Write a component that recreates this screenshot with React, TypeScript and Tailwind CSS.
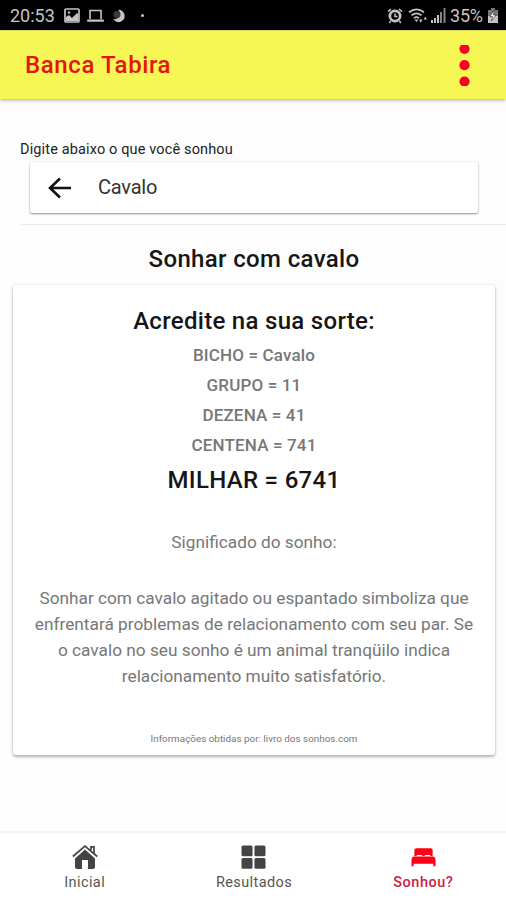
import React from "react";

const font = "font-['Roboto','Liberation_Sans',sans-serif]";

function StatusBar() {
  return (
    <div className="flex h-[30px] shrink-0 items-center bg-black text-[#c4c4c4]">
      <span className="ml-[10px] mt-[2px] w-[46px] whitespace-nowrap text-[18px] leading-[24px]">20:53</span>
      <svg className="ml-[8px] mt-[1px]" width="16" height="15" viewBox="0 0 16 15">
        <rect x="1" y="1" width="14" height="13" rx="1" fill="none" stroke="currentColor" strokeWidth="1.7" />
        <path d="M2 12V9l3-2 3 3 5-5 1 1v7H2Z" fill="currentColor" />
        <circle cx="5" cy="4.5" r="1.2" fill="currentColor" />
      </svg>
      <svg className="ml-[7px] mt-[1px]" width="17" height="14" viewBox="0 0 17 14">
        <path d="M3 10V1.5h11V10" fill="none" stroke="currentColor" strokeWidth="1.6" />
        <rect y="10.5" width="17" height="2.2" rx="1" fill="currentColor" />
      </svg>
      <svg className="ml-[9px] mt-[1px]" width="13" height="14" viewBox="0 0 13 14">
        <path d="M5 .8A6.200 6.200 0 0 1 6 13.200 6 6 0 0 1 .4 9.800C6 11.200 9.500 5.500 5 .8Z" fill="currentColor" />
        <circle cx="4" cy="5.500" r="3.500" fill="#3a3a3a" />
      </svg>
      <span className="ml-[15px] h-[3px] w-[3px] rounded-full bg-[#c4c4c4]" />
      <svg className="ml-auto mt-[1px]" width="16" height="16" viewBox="0 0 16 16">
        <circle cx="8" cy="8" r="6.5" fill="currentColor" />
        <circle cx="8" cy="8" r="3.8" fill="#000" />
        <path d="M8 5.5V8.5H10.5M1 3.7 4 1.2M15 3.7 12 1.2M3.6 13 2.2 15M12.4 13l1.4 2" fill="none" stroke="currentColor" strokeWidth="1.5" />
      </svg>
      <svg className="ml-[5px] mt-[1px]" width="20" height="16" viewBox="0 0 20 16">
        <g fill="none" stroke="currentColor" strokeWidth="1.7">
          <path d="M1 4.2Q8.5-1.5 16 4.2M3.5 7.3Q8.5 3.3 13.5 7.3M6 10.2Q8.5 8 11 10.2" />
        </g>
        <path d="m8.5 14-2-2.5h4ZM11.2 11.5h3.2L12.8 15ZM15.7 11.5h3.2l-1.6-3Z" fill="currentColor" />
      </svg>
      <svg className="ml-[3px] mt-[1px]" width="15" height="15" viewBox="0 0 15 15">
        <path d="M0 12h2v3H0ZM3 10h2v5H3ZM6 7h2v8H6Z" fill="currentColor" />
        <path d="M9 4h2v11H9ZM12.500 0h2v15h-2Z" fill="#858585" />
      </svg>
      <span className="ml-[4px] mt-[2px] w-[36px] whitespace-nowrap text-[18px] leading-[24px] tracking-[-0.2px]">35%</span>
      <svg className="ml-[2px] mr-[8px] mt-[1px]" width="10" height="15" viewBox="0 0 10 15">
        <path d="M3 0h4v2h3v6H0V2h3Z" fill="#777" />
        <path d="M0 8h10v7H0Z" fill="currentColor" />
        <path d="M6 2 2 8.500h2.500L3.500 13 8 7H5.500Z" fill="#fff" stroke="#222" strokeWidth=".6" />
      </svg>
    </div>
  );
}

function Header() {
  return (
    <header className="z-10 flex h-[69px] shrink-0 items-center justify-between border-t border-[#d9d95c] bg-[#f6f655] pl-[25px] pr-[36px] shadow-[0_1px_4px_rgba(0,0,0,0.35)]">
      <h1 className="text-[24px] font-medium leading-[28px] tracking-[0.6px] text-[#e3150d]">Banca Tabira</h1>
      <svg width="11" height="41" viewBox="0 0 11 41" fill="#fb0026">
        <circle cx="5.500" cy="3.800" r="5.100" />
        <circle cx="5.500" cy="20.200" r="5.100" />
        <circle cx="5.500" cy="36.500" r="5.100" />
      </svg>
    </header>
  );
}

function SearchArea() {
  return (
    <section className="flex shrink-0 flex-col pt-[41px]">
      <label className="ml-[20px] text-[14.5px] leading-[20px] tracking-[0.14px] text-[#222]">Digite abaixo o que você sonhou</label>
      <div className="ml-[30px] mt-[2px] flex h-[51px] w-[448px] items-center rounded-[2px] bg-white shadow-[0_1px_2px_rgba(0,0,0,0.4),0_0_2px_rgba(0,0,0,0.12)]">
        <svg className="ml-[18px]" width="24" height="22" viewBox="0 0 24 22" fill="none" stroke="#111" strokeWidth="2.600">
          <path d="M12 1.500 2 11l10 9.500M2 11h21" />
        </svg>
        <span className="mb-px ml-[26px] text-[20px] leading-[24px] tracking-[-0.2px] text-[#333]">Cavalo</span>
      </div>
      <div className="ml-[21px] mt-[11px] h-px bg-[#e9e9e9]" />
    </section>
  );
}

function DreamCard() {
  return (
    <article className="ml-[13px] mt-[10px] flex h-[470px] w-[482px] shrink-0 flex-col items-center whitespace-nowrap rounded-[3px] bg-white pt-[20px] text-[#777] shadow-[0_2px_3px_rgba(0,0,0,0.27),0_0_3px_rgba(0,0,0,0.12)]">
      <h3 className="text-[24px] font-medium leading-[32px] tracking-[0.3px] text-[#161616]">Acredite na sua sorte:</h3>
      <div className="mt-[3px] text-center text-[17px] font-medium leading-[30px] tracking-[0.15px]">
        <p>BICHO = Cavalo</p>
        <p>GRUPO = 11</p>
        <p>DEZENA = 41</p>
        <p>CENTENA = 741</p>
      </div>
      <p className="mt-[4px] text-[24px] font-medium leading-[32px] tracking-[0.3px] text-[#161616]">MILHAR = 6741</p>
      <p className="mt-[33px] text-[17.25px] leading-[26px]">Significado do sonho:</p>
      <p className="mt-[30px] text-center text-[17.25px] leading-[26px]">
        <span className="block">Sonhar com cavalo agitado ou espantado simboliza que</span>
        <span className="block">enfrentará problemas de relacionamento com seu par. Se</span>
        <span className="block">o cavalo no seu sonho é um animal tranqüilo indica</span>
        <span className="block">relacionamento muito satisfatório.</span>
      </p>
      <small className="mt-[43px] text-[9.9px] leading-[14px]">Informações obtidas por: livro dos sonhos.com</small>
    </article>
  );
}

function Tab({ label, active, children }: { label: string; active?: boolean; children: React.ReactNode }) {
  return (
    <button className={`flex flex-1 flex-col items-center pt-[11px] ${active ? "text-[#cf2042]" : "text-[#555]"}`}>
      <span className="flex h-[26px] items-center">{children}</span>
      <span className={`mt-[4px] text-[14.5px] leading-[18px] ${active ? "font-medium tracking-[0.5px]" : "tracking-[0.4px]"}`}>{label}</span>
    </button>
  );
}

function TabBar() {
  return (
    <nav className="-mr-[2px] mt-auto flex h-[69px] shrink-0 border-t-2 border-[#f2f2f2] bg-white">
      <Tab label="Inicial">
        <svg width="26" height="24" viewBox="0 0 26 24" fill="#444">
          <path d="M13 4.500 3 13.500V22q0 2 2 2h5v-9h6v9h5q2 0 2-2v-8.500Z" />
          <path d="m.8 11.500 12.200-10.300 12.200 10.300M19 5V1.800h3V8" fill="none" stroke="#444" strokeWidth="1.700" />
        </svg>
      </Tab>
      <Tab label="Resultados">
        <svg width="25" height="24" viewBox="0 0 26 25" fill="#444">
          <rect x=".5" y=".5" width="11.500" height="11.200" rx="1.600" />
          <rect x="14" y=".5" width="11.500" height="11.200" rx="1.600" />
          <rect x=".5" y="13.500" width="11.500" height="11.200" rx="1.600" />
          <rect x="14" y="13.500" width="11.500" height="11.200" rx="1.600" />
        </svg>
      </Tab>
      <Tab label="Sonhou?" active>
        <svg width="25" height="20" viewBox="0 0 26 20" fill="#fb0018">
          <path d="M3.500 9V3Q3.500 1 5.500 1h15q2 0 2 2v6h-2l-.8-1.200h-5L14 9h-2l-.7-1.200h-5L5.500 9Z" />
          <path d="M3.500 9.600h19q3 0 3 4v5.900h-2.200V17H2.700v2.500H.5v-5.900q0-4 3-4Z" />
        </svg>
      </Tab>
    </nav>
  );
}

export default function App() {
  return (
    <main className={`flex h-[900px] w-[506px] flex-col overflow-hidden bg-[#fdfdfd] ${font}`}>
      <StatusBar />
      <Header />
      <SearchArea />
      <h2 className="mt-[18px] shrink-0 pl-[2px] text-center text-[24px] font-medium leading-[32px] tracking-[0.35px] text-[#161616]">Sonhar com cavalo</h2>
      <DreamCard />
      <TabBar />
    </main>
  );
}
